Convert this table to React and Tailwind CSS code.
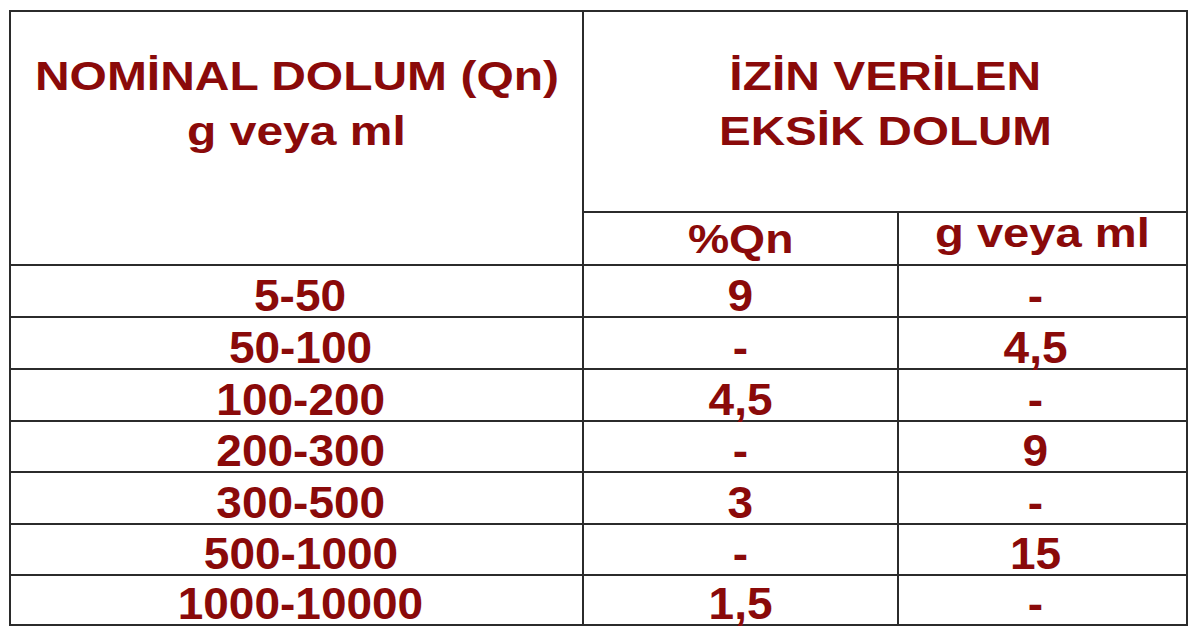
import React from "react";

const rows = [
  ["5-50", "9", "-", "h-[52px]"],
  ["50-100", "-", "4,5", "h-[52px]"],
  ["100-200", "4,5", "-", "h-[52px]"],
  ["200-300", "-", "9", "h-[51px]"],
  ["300-500", "3", "-", "h-[52px]"],
  ["500-1000", "-", "15", "h-[51px]"],
  ["1000-10000", "1,5", "-", "h-[50px]"],
];

function W({ children, s = "scale-x-[1.045]" }) {
  return <span className={`inline-block whitespace-nowrap ${s}`}>{children}</span>;
}

export default function App() {
  const cell = "border-2 border-[#2b2b2b] text-center p-0";
  const data = "align-bottom pb-0 text-[44px] leading-[40px]";
  return (
    <div className="w-[1200px] h-[636px] bg-white overflow-hidden pl-[9px] pt-[10px]">
      <table
        className="border-collapse table-fixed text-[#8a0a0a] font-bold leading-none"
        style={{ fontFamily: '"Liberation Sans", Arial, sans-serif', width: 1179 }}
      >
        <colgroup>
          <col className="w-[573px]" />
          <col className="w-[315px]" />
          <col className="w-[289px]" />
        </colgroup>
        <tbody>
          <tr className="h-[201px]">
            <td rowSpan={2} className={`${cell} align-top pt-[37px] text-[41px] leading-[55px]`}>
              <W s="scale-x-[1.17]">NOMİNAL DOLUM (Qn)</W>
              <br />
              <W s="scale-x-[1.17]">g veya ml</W>
            </td>
            <td colSpan={2} className={`${cell} align-top pt-[37px] text-[41px] leading-[55px]`}>
              <W s="scale-x-[1.17]">İZİN VERİLEN</W>
              <br />
              <W s="scale-x-[1.16]">EKSİK DOLUM</W>
            </td>
          </tr>
          <tr className="h-[52px]">
            <td className={`${cell} align-bottom pb-[4px] text-[41px]`}>
              <W s="scale-x-[1.13]">%Qn</W>
            </td>
            <td className={`${cell} align-bottom pb-[10px] text-[41px]`}>
              <W s="scale-x-[1.15]">g veya ml</W>
            </td>
          </tr>
          {rows.map(([a, b, c, h]) => (
            <tr key={a} className={h}>
              <td className={`${cell} ${data} pl-[8px]`}>
                <W>{a}</W>
              </td>
              <td className={`${cell} ${data}`}>
                <W>{b}</W>
              </td>
              <td className={`${cell} ${data} pr-[14px]`}>
                <W>{c}</W>
              </td>
            </tr>
          ))}
        </tbody>
      </table>
    </div>
  );
}
